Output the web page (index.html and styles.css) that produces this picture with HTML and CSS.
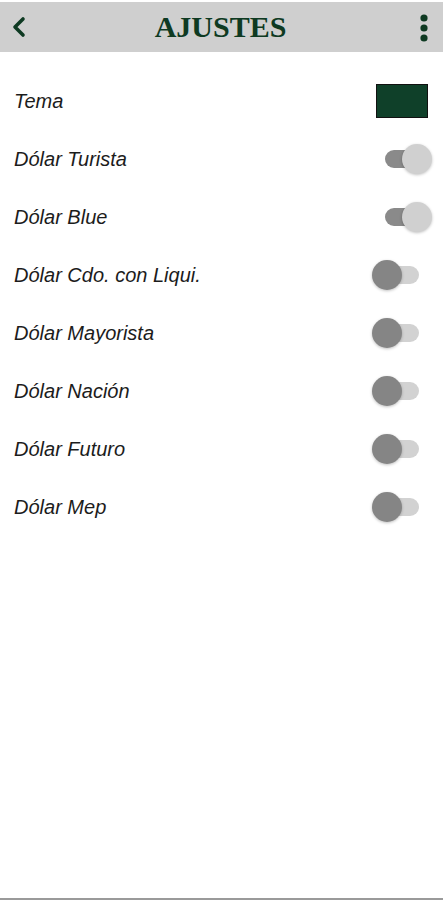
FILE: index.html
```html
<!DOCTYPE html>
<html>
<head>
    <title>Ajustes</title>
    <link rel="stylesheet" href="styles.css">
</head>
<body>
    <div class="screen">
        <div class="toolbar">
            <svg class="back" width="16" height="22" viewBox="0 0 16 22">
                <path d="M12 3 L4 11 L12 19" fill="none" stroke="#0e3a22" stroke-width="3.6" stroke-linecap="round" stroke-linejoin="round"/>
            </svg>
            <div class="title">AJUSTES</div>
            <svg class="menu" width="8" height="28" viewBox="0 0 8 28">
                <circle cx="4" cy="4" r="3.6" fill="#0e3a22"/>
                <circle cx="4" cy="14" r="3.6" fill="#0e3a22"/>
                <circle cx="4" cy="24" r="3.6" fill="#0e3a22"/>
            </svg>
        </div>
        <div class="settings">
            <div class="row">
                <span class="label">Tema</span>
                <div class="swatch"></div>
            </div>
            <div class="row">
                <span class="label">Dólar Turista</span>
                <div class="switch on"><div class="track"></div><div class="thumb"></div></div>
            </div>
            <div class="row">
                <span class="label">Dólar Blue</span>
                <div class="switch on"><div class="track"></div><div class="thumb"></div></div>
            </div>
            <div class="row">
                <span class="label">Dólar Cdo. con Liqui.</span>
                <div class="switch"><div class="track"></div><div class="thumb"></div></div>
            </div>
            <div class="row">
                <span class="label">Dólar Mayorista</span>
                <div class="switch"><div class="track"></div><div class="thumb"></div></div>
            </div>
            <div class="row">
                <span class="label">Dólar Nación</span>
                <div class="switch"><div class="track"></div><div class="thumb"></div></div>
            </div>
            <div class="row">
                <span class="label">Dólar Futuro</span>
                <div class="switch"><div class="track"></div><div class="thumb"></div></div>
            </div>
            <div class="row">
                <span class="label">Dólar Mep</span>
                <div class="switch"><div class="track"></div><div class="thumb"></div></div>
            </div>
        </div>
    </div>
</body>
</html>
```

FILE: styles.css
```css
body {
    margin: 0;
    background-color: #ffffff;
    font-family: "Liberation Sans", Arial, sans-serif;
}
.screen {
    height: 900px;
    box-sizing: border-box;
    padding-top: 2px;
    border-bottom: 2px solid #9a9a9a;
}
.toolbar {
    height: 50px;
    background-color: #cfcfcf;
    display: flex;
    align-items: center;
    justify-content: space-between;
    padding: 0 15px 0 11px;
}
.title {
    font-family: "Liberation Serif", serif;
    font-weight: bold;
    font-size: 30px;
    color: #0e3a22;
    margin-right: 6px;
}
.menu {
    margin-top: 2px;
}
.settings {
    padding-top: 20px;
}
.row {
    height: 58px;
    display: flex;
    align-items: center;
    justify-content: space-between;
    padding: 0 15px 0 14px;
}
.label {
    font-style: italic;
    font-size: 20px;
    color: #1c1c1c;
}
.swatch {
    width: 50px;
    height: 32px;
    background-color: #0f4029;
    border: 1px solid #111111;
}
.switch {
    position: relative;
    width: 60px;
    height: 30px;
    margin-right: -4px;
    display: flex;
    align-items: center;
    justify-content: center;
}
.track {
    width: 34px;
    height: 18px;
    border-radius: 9px;
    background-color: #d2d2d2;
}
.thumb {
    position: absolute;
    top: 0;
    left: 0;
    width: 30px;
    height: 30px;
    border-radius: 50%;
    background-color: #858585;
    box-shadow: 0 1px 3px rgba(0, 0, 0, 0.25);
}
.switch.on .track {
    background-color: #8a8a8a;
}
.switch.on .thumb {
    left: 30px;
    background-color: #d0d0d0;
}
```
